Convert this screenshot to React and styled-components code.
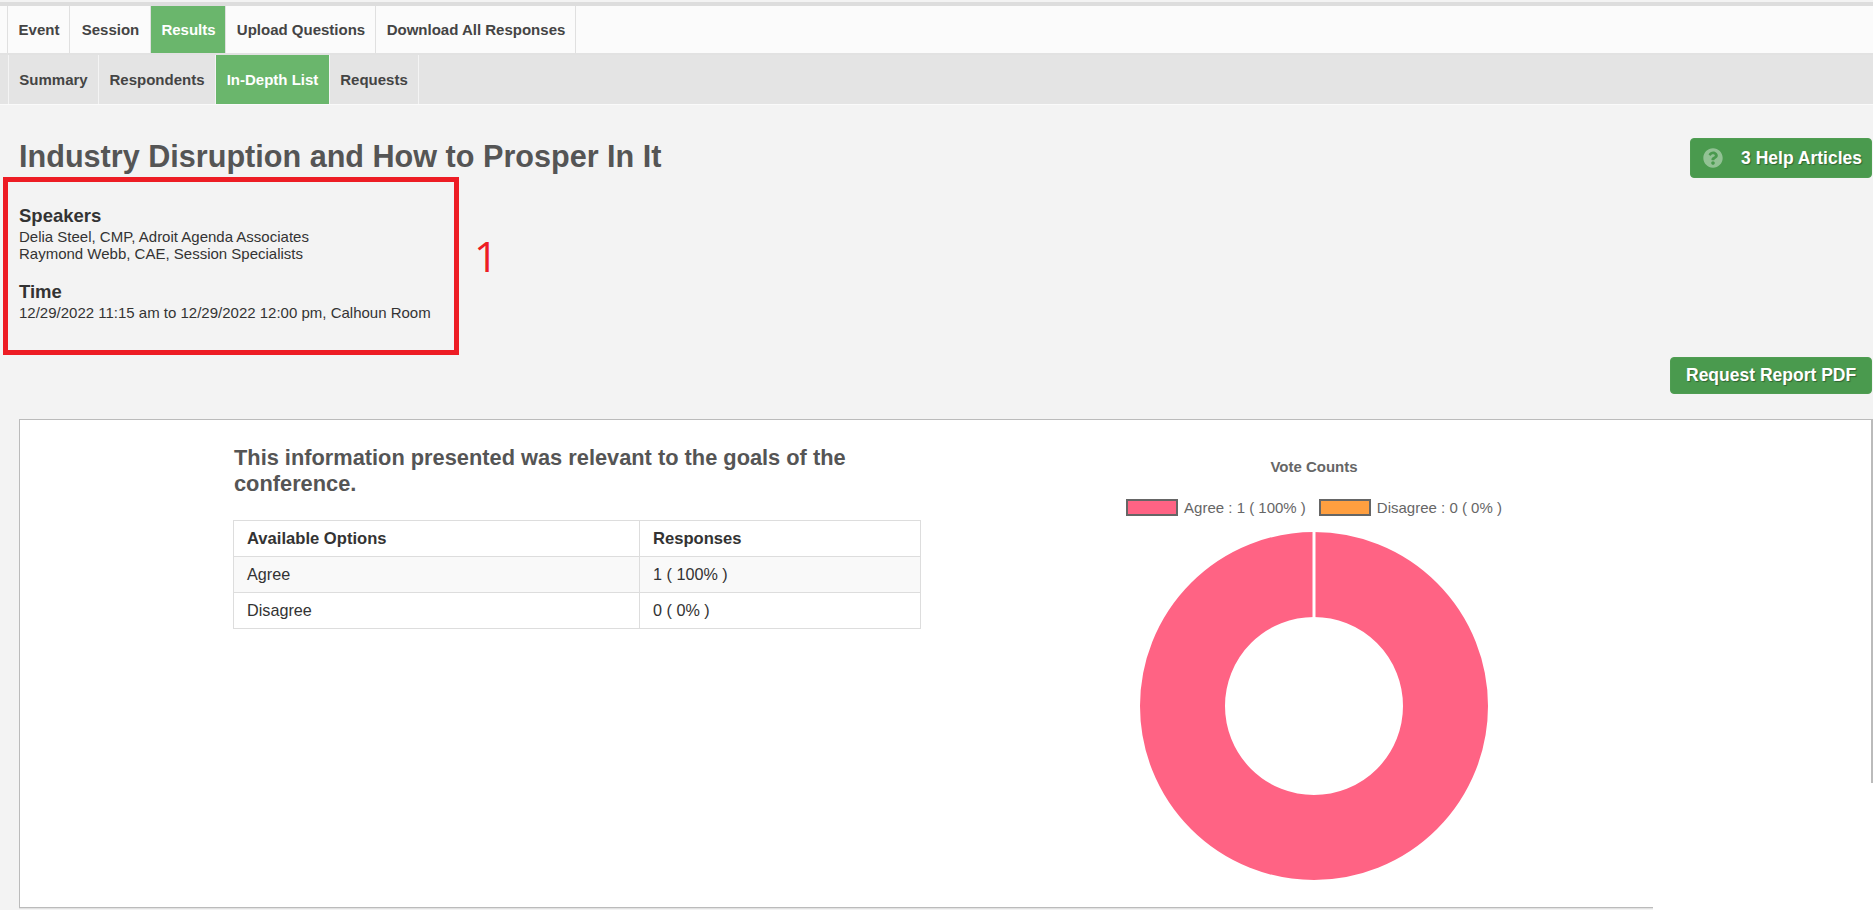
import React from 'react';
import styled, { createGlobalStyle } from 'styled-components';
import { FaQuestionCircle } from 'react-icons/fa';

const GlobalStyle = createGlobalStyle`
  html, body {
    margin: 0;
    padding: 0;
    height: 100%;
    background: #f3f3f3;
    overflow: hidden;
  }
  body {
    font-family: "Liberation Sans", Arial, sans-serif;
    color: #333;
  }
`;

const Page = styled.div`
  position: relative;
  height: 910px;
  overflow: hidden;
  padding-top: 2px;
  box-sizing: border-box;
`;

const TopStrip = styled.div`
  height: 4px;
  background: #dddddd;
`;

const Bar = styled.nav`
  display: flex;
  box-sizing: border-box;
  height: ${props => props.$height}px;
  padding-left: ${props => props.$inset}px;
  background: ${props => props.$bg};
  border-bottom: ${props => props.$line};
`;

const Tab = styled.a`
  display: flex;
  align-items: center;
  box-sizing: border-box;
  width: ${props => props.$width}px;
  justify-content: center;
  padding-left: ${props => props.$nudge || 0}px;
  font-size: 15px;
  font-weight: 700;
  color: ${props => (props.$active ? '#fff' : '#444')};
  background: ${props => (props.$active ? '#6ab66c' : 'transparent')};
  border-left: 1px solid ${props => props.$rule};
  &:last-child {
    border-right: 1px solid ${props => props.$rule};
  }
`;

const TitleRow = styled.div`
  display: flex;
  justify-content: space-between;
  align-items: center;
  height: 40px;
  margin: 33px 1px -1px 19px;
`;

const Title = styled.h1`
  margin: -4px 0 0;
  font-size: 30.6px;
  line-height: 36px;
  font-weight: 700;
  color: #555;
`;

const GreenButton = styled.button`
  display: flex;
  align-items: center;
  box-sizing: border-box;
  width: ${props => props.$width}px;
  height: ${props => props.$height}px;
  padding: ${props => props.$padding};
  justify-content: space-between;
  border: 1px solid #4f9d52;
  border-radius: 4px;
  background: #4a9a4e;
  color: #fff;
  font-family: inherit;
  font-size: 17.5px;
  font-weight: 700;
  white-space: nowrap;
  text-shadow: 1px 1px 1px rgba(0, 0, 0, 0.35);
  svg {
    color: rgba(255, 255, 255, 0.4);
  }
`;

const InfoBox = styled.section`
  position: relative;
  box-sizing: border-box;
  width: 456px;
  height: 178px;
  margin-left: 3px;
  padding: 23px 0 0 11px;
  border: 5px solid #ed1c24;
  color: #333;
`;

const Marker = styled.span`
  position: absolute;
  left: 466px;
  top: 50px;
  font-family: "Open Sans", "Liberation Sans", sans-serif;
  font-size: 42px;
  line-height: 48px;
  color: #ed1c24;
`;

const InfoLabel = styled.h4`
  margin: 0 0 1px;
  font-size: 18.5px;
  line-height: 22px;
  font-weight: 700;
  color: #333;
`;

const InfoText = styled.div`
  font-size: 15px;
  line-height: 17px;
  margin-bottom: ${props => props.$gap || 0}px;
`;

const ActionRow = styled.div`
  display: flex;
  justify-content: flex-end;
  margin: 2px 1px 25px 0;
`;

const Panel = styled.section`
  display: flex;
  box-sizing: border-box;
  height: 489px;
  margin-left: 19px;
  padding-left: 213px;
  background: #fff;
  border: 1px solid #bbb;
  border-right-width: 2px;
  box-shadow: 0 1px 0 #e2e2e2;
`;

const QuestionCol = styled.div`
  width: 688px;
  padding-top: 25px;
`;

const Question = styled.h3`
  margin: 0 0 23px 1px;
  font-size: 21.8px;
  line-height: 26px;
  font-weight: 700;
  color: #555;
`;

const Table = styled.table`
  width: 687px;
  border-collapse: collapse;
  table-layout: fixed;
  font-size: 16.2px;
`;

const HeadCell = styled.th`
  height: 36px;
  padding: 0 13px;
  box-sizing: border-box;
  border: 1px solid #ddd;
  text-align: left;
  font-size: 16.6px;
  font-weight: 700;
  color: #333;
`;

const Cell = styled.td`
  height: 36px;
  padding: 0 13px;
  box-sizing: border-box;
  border: 1px solid #ddd;
  color: #333;
`;

const Row = styled.tr`
  background: ${props => (props.$striped ? '#f9f9f9' : '#fff')};
`;

const ChartCol = styled.div`
  display: flex;
  flex-direction: column;
  align-items: center;
  width: 400px;
  margin-left: 193px;
  padding-top: 38px;
`;

const ChartTitle = styled.div`
  font-size: 15px;
  line-height: 18px;
  font-weight: 700;
  color: #666;
`;

const Legend = styled.div`
  display: flex;
  gap: 13px;
  margin-top: 22px;
  margin-bottom: 14px;
  height: 18px;
  align-items: center;
`;

const LegendItem = styled.div`
  display: flex;
  align-items: center;
  gap: 6px;
  font-size: 15px;
  color: #666;
  white-space: nowrap;
`;

const Swatch = styled.span`
  display: block;
  box-sizing: border-box;
  width: 52px;
  height: 17px;
  background: ${props => props.$color};
  border: 2px solid #666;
`;

const CornerPatch = styled.div`
  position: absolute;
  right: 0;
  bottom: 0;
  width: 220px;
  height: 127px;
  background: #fff;
`;

const mainTabs = [
  { label: 'Event', width: 62 },
  { label: 'Session', width: 81 },
  { label: 'Results', width: 75, active: true },
  { label: 'Upload Questions', width: 150 },
  { label: 'Download All Responses', width: 201 }
];

const subTabs = [
  { label: 'Summary', width: 90 },
  { label: 'Respondents', width: 117 },
  { label: 'In-Depth List', width: 114, active: true },
  { label: 'Requests', width: 90 }
];

const Donut = () => (
  <svg width="352" height="352" viewBox="0 0 352 352">
    <circle cx="176" cy="176" r="131.5" fill="none" stroke="#ff6384" strokeWidth="85" />
    <line x1="176" y1="1" x2="176" y2="88" stroke="#fff" strokeWidth="3" />
  </svg>
);

const App = () => (
  <Page>
    <GlobalStyle />
    <TopStrip />
    <Bar $height={49} $inset={7} $bg="#fbfbfb" $line="2px solid #e2e2e2">
      {mainTabs.map(tab => (
        <Tab key={tab.label} $width={tab.width} $active={tab.active} $nudge={1} $rule="#e0e0e0">
          {tab.label}
        </Tab>
      ))}
    </Bar>
    <Bar $height={50} $inset={8} $bg="#e4e4e4" $line="1px solid #fafafa">
      {subTabs.map(tab => (
        <Tab key={tab.label} $width={tab.width} $active={tab.active} $rule="#f4f4f4">
          {tab.label}
        </Tab>
      ))}
    </Bar>

    <TitleRow>
      <Title>Industry Disruption and How to Prosper In It</Title>
      <GreenButton $width={182} $height={40} $padding="0 9px 0 12px">
        <FaQuestionCircle size={20} />
        3 Help Articles
      </GreenButton>
    </TitleRow>

    <InfoBox>
      <InfoLabel>Speakers</InfoLabel>
      <InfoText $gap={19}>
        Delia Steel, CMP, Adroit Agenda Associates
        <br />
        Raymond Webb, CAE, Session Specialists
      </InfoText>
      <InfoLabel>Time</InfoLabel>
      <InfoText>12/29/2022 11:15 am to 12/29/2022 12:00 pm, Calhoun Room</InfoText>
      <Marker>1</Marker>
    </InfoBox>

    <ActionRow>
      <GreenButton $width={202} $height={37} $padding="0 15px">
        Request Report PDF
      </GreenButton>
    </ActionRow>

    <Panel>
      <QuestionCol>
        <Question>This information presented was relevant to the goals of the conference.</Question>
        <Table>
          <colgroup>
            <col width="406" />
            <col width="281" />
          </colgroup>
          <thead>
            <tr>
              <HeadCell>Available Options</HeadCell>
              <HeadCell>Responses</HeadCell>
            </tr>
          </thead>
          <tbody>
            <Row $striped>
              <Cell>Agree</Cell>
              <Cell>1 ( 100% )</Cell>
            </Row>
            <Row>
              <Cell>Disagree</Cell>
              <Cell>0 ( 0% )</Cell>
            </Row>
          </tbody>
        </Table>
      </QuestionCol>
      <ChartCol>
        <ChartTitle>Vote Counts</ChartTitle>
        <Legend>
          <LegendItem>
            <Swatch $color="#ff6384" />
            Agree : 1 ( 100% )
          </LegendItem>
          <LegendItem>
            <Swatch $color="#ff9f40" />
            Disagree : 0 ( 0% )
          </LegendItem>
        </Legend>
        <Donut />
      </ChartCol>
    </Panel>
    <CornerPatch />
  </Page>
);

export default App;
